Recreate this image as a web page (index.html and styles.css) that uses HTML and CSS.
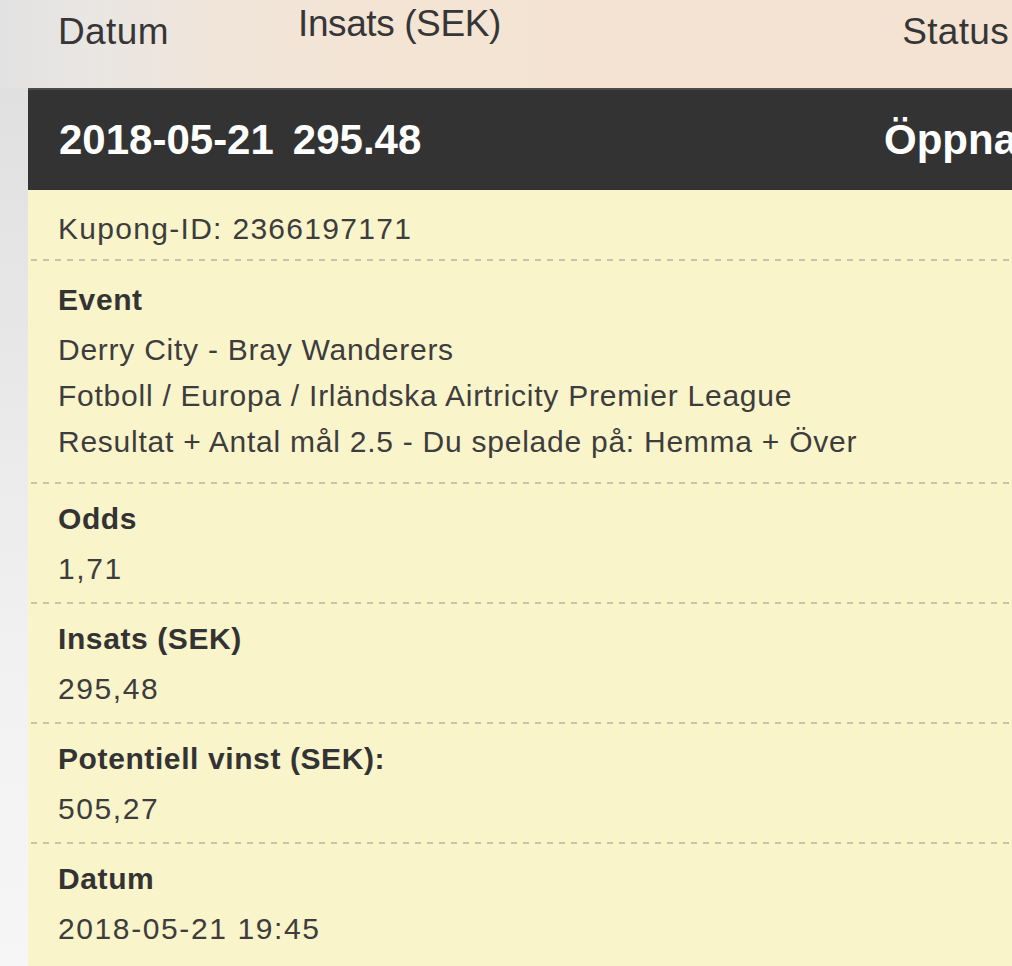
FILE: index.html
```html
<!DOCTYPE html>
<html lang="sv">
<head>
<meta charset="utf-8">
<title>Kupong</title>
<link rel="stylesheet" href="styles.css">
</head>
<body>
<div class="page">
  <header class="head">
    <div class="head-date">Datum</div>
    <div class="head-stake">Insats (SEK)</div>
    <div class="head-status">Status</div>
  </header>
  <section class="card">
    <div class="bar">
      <div class="bar-left">
        <span>2018-05-21</span>
        <span>295.48</span>
      </div>
      <div class="bar-status">Öppna</div>
    </div>
    <div class="details">
      <div class="row row-id">Kupong-ID: 2366197171</div>
      <div class="row row-event">
        <div class="label">Event</div>
        <div class="value">Derry City - Bray Wanderers</div>
        <div class="value">Fotboll / Europa / Irländska Airtricity Premier League</div>
        <div class="value">Resultat + Antal mål 2.5 - Du spelade på: Hemma + Över</div>
      </div>
      <div class="row">
        <div class="label">Odds</div>
        <div class="value num">1,71</div>
      </div>
      <div class="row">
        <div class="label">Insats (SEK)</div>
        <div class="value num">295,48</div>
      </div>
      <div class="row">
        <div class="label">Potentiell vinst (SEK):</div>
        <div class="value num">505,27</div>
      </div>
      <div class="row row-last">
        <div class="label">Datum</div>
        <div class="value num">2018-05-21 19:45</div>
      </div>
    </div>
  </section>
</div>
</body>
</html>
```

FILE: styles.css
```css
html, body {
  margin: 0;
  padding: 0;
  overflow: hidden;
}

body {
  font-family: "Liberation Sans", Arial, Helvetica, sans-serif;
  color: #333333;
  background: linear-gradient(180deg, #dedede 0px, #e6e6e6 300px, #f1f1f1 650px, #f6f6f6 966px);
  min-height: 966px;
}

.page {
  display: flex;
  flex-direction: column;
}

.head {
  height: 88px;
  box-sizing: border-box;
  display: flex;
  align-items: flex-start;
  padding-top: 10px;
  padding-left: 58px;
  padding-right: 3px;
  font-size: 37px;
  line-height: 44px;
  color: #363636;
  background: linear-gradient(90deg, #e2e2e2 0px, #e9e6e3 90px, #f1e5da 220px, #f4e4d3 420px, #f4e3d2 1012px);
}

.head-date {
  width: 240px;
  letter-spacing: 0.4px;
}

.head-stake {
  margin-top: -8px;
  letter-spacing: -0.4px;
}

.head-status {
  margin-left: auto;
  letter-spacing: 0.3px;
}

.card {
  margin-left: 28px;
  margin-right: -36px;
  background: #faf4cb;
  min-height: 878px;
}

.bar {
  height: 100px;
  border-top: 2px solid #4b4b4b;
  background: #333333;
  color: #ffffff;
  display: flex;
  align-items: center;
  justify-content: space-between;
  padding: 0 31px 0 31px;
  font-size: 42px;
  font-weight: bold;
}

.bar-left {
  display: flex;
  gap: 19px;
}

.details {
  display: flex;
  flex-direction: column;
}

.row {
  padding: 12px 30px 10px 30px;
  font-size: 30px;
  line-height: 46px;
  background-image: repeating-linear-gradient(90deg, #c8c4aa 0px, #c8c4aa 6px, transparent 6px, transparent 12px);
  background-size: 100% 2px;
  background-repeat: no-repeat;
  background-position: 3px 0;
  border-top: 2px solid transparent;
  background-origin: border-box;
}

.row-id {
  border-top: 0;
  background-image: none;
  padding-top: 16px;
  padding-bottom: 7px;
  letter-spacing: 1.3px;
  color: #3d3d3d;
}

.row-event {
  padding-top: 16px;
  padding-bottom: 17px;
}

.row-last {
  padding-bottom: 40px;
}

.label {
  font-weight: bold;
  letter-spacing: 0.6px;
  margin-bottom: 4px;
  color: #333333;
}

.value {
  letter-spacing: 0.75px;
  color: #3d3d3d;
}

.value.num {
  letter-spacing: 1.6px;
}
```
